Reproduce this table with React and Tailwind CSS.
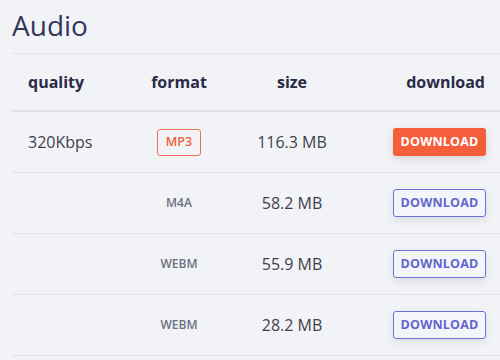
import React from "react";

const rows = [
  { q: "320Kbps", f: "MP3", s: "116.3 MB", primary: true },
  { q: "", f: "M4A", s: "58.2 MB" },
  { q: "", f: "WEBM", s: "55.9 MB" },
  { q: "", f: "WEBM", s: "28.2 MB" },
];

export default function App() {
  return (
    <div
      className="w-[500px] h-[360px] overflow-hidden bg-[#f2f3f6] pl-3"
      style={{ fontFamily: '"Open Sans", "Noto Sans", sans-serif' }}
    >
      <div className="h-[53px] pt-[6px] text-[28px] leading-[38px] text-[#35355a]">Audio</div>
      <div className="grid grid-cols-[110px_114px_112px_1fr] h-[59px] items-center border-t border-b-2 border-t-[#e2e3e8] border-b-[#dfe0e5] text-[16px] font-bold text-[#2b2b48]">
        <div className="pl-4">quality</div>
        <div className="text-center">format</div>
        <div className="text-center">size</div>
        <div className="text-right pr-[15px]">download</div>
      </div>
      {rows.map((r, i) => (
        <div
          key={i}
          className="grid grid-cols-[110px_114px_112px_1fr] h-[61px] items-center border-b border-[#e2e3e8] text-[16px] text-[#3f3f4c]"
        >
          <div className="pl-4">{r.q}</div>
          <div className="flex justify-center">
            {r.primary ? (
              <span className="inline-flex items-center justify-center h-[27px] px-[8px] border border-[#e8735a] rounded-[3px] text-[12.5px] font-semibold text-[#f0603c]">
                {r.f}
              </span>
            ) : (
              <span className="text-[12px] font-semibold text-[#6b7082]">{r.f}</span>
            )}
          </div>
          <div className="text-center">{r.s}</div>
          <div className="flex justify-end pr-[14px]">
            {r.primary ? (
              <button className="w-[93px] h-[28px] rounded-[3px] bg-[#f45e3b] text-white text-[12.5px] font-bold tracking-[0.2px] shadow-[0_3px_8px_rgba(0,0,0,0.12)]">
                DOWNLOAD
              </button>
            ) : (
              <button className="w-[93px] h-[28px] rounded-[3px] border border-[#6e72d6] bg-[#f4f5fb] text-[#6266cc] text-[12.5px] font-bold tracking-[0.2px] shadow-[0_3px_8px_rgba(0,0,0,0.10)]">
                DOWNLOAD
              </button>
            )}
          </div>
        </div>
      ))}
    </div>
  );
}
